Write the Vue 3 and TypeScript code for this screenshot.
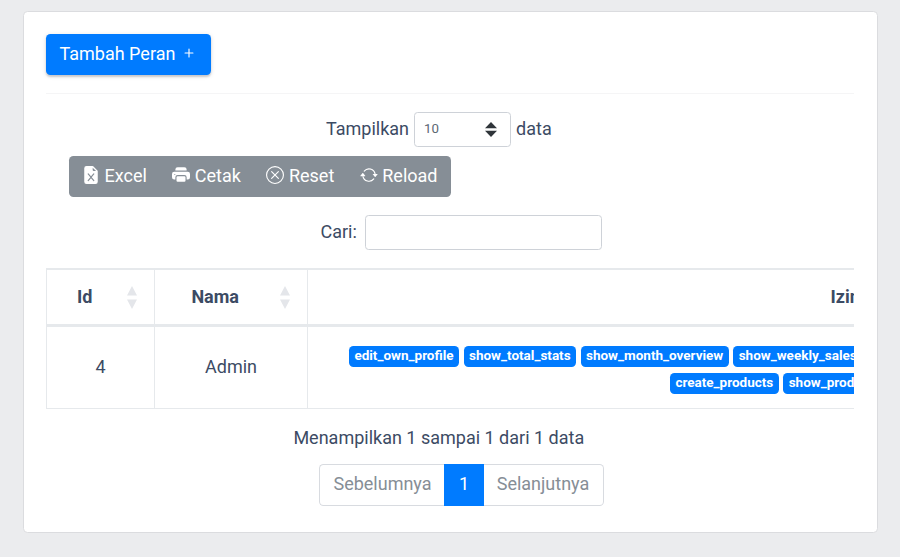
<script setup lang="ts">
import { ref } from 'vue'

interface ToolAction {
  label: string
  name: string
  paths: string[]
}

const actions: ToolAction[] = [
  {
    label: 'Excel',
    name: 'excel',
    paths: [
      'M9.293 0H4a2 2 0 0 0-2 2v12a2 2 0 0 0 2 2h8a2 2 0 0 0 2-2V4.707A1 1 0 0 0 13.707 4L10 .293A1 1 0 0 0 9.293 0zM9.5 3.5v-2l3 3h-2a1 1 0 0 1-1-1zM5.884 6.68 8 9.219l2.116-2.54a.5.5 0 1 1 .768.641L8.651 10l2.233 2.68a.5.5 0 0 1-.768.64L8 10.781l-2.116 2.54a.5.5 0 0 1-.768-.641L7.349 10 5.116 7.32a.5.5 0 1 1 .768-.64z',
    ],
  },
  {
    label: 'Cetak',
    name: 'print',
    paths: [
      'M5 1a2 2 0 0 0-2 2v1h10V3a2 2 0 0 0-2-2H5zm6 8H5a1 1 0 0 0-1 1v3a1 1 0 0 0 1 1h6a1 1 0 0 0 1-1v-3a1 1 0 0 0-1-1z',
      'M0 7a2 2 0 0 1 2-2h12a2 2 0 0 1 2 2v3a2 2 0 0 1-2 2h-1v-2a2 2 0 0 0-2-2H5a2 2 0 0 0-2 2v2H2a2 2 0 0 1-2-2V7zm2.5 1a.5.5 0 1 0 0-1 .5.5 0 0 0 0 1z',
    ],
  },
  {
    label: 'Reset',
    name: 'reset',
    paths: [
      'M8 15A7 7 0 1 1 8 1a7 7 0 0 1 0 14zm0 1A8 8 0 1 0 8 0a8 8 0 0 0 0 16z',
      'M4.646 4.646a.5.5 0 0 1 .708 0L8 7.293l2.646-2.647a.5.5 0 0 1 .708.708L8.707 8l2.647 2.646a.5.5 0 0 1-.708.708L8 8.707l-2.646 2.647a.5.5 0 0 1-.708-.708L7.293 8 4.646 5.354a.5.5 0 0 1 0-.708z',
    ],
  },
  {
    label: 'Reload',
    name: 'reload',
    paths: [
      'M11.534 7h3.932a.25.25 0 0 1 .192.41l-1.966 2.36a.25.25 0 0 1-.384 0l-1.966-2.36a.25.25 0 0 1 .192-.41zm-11 2h3.932a.25.25 0 0 0 .192-.41L2.692 6.23a.25.25 0 0 0-.384 0L.342 8.59A.25.25 0 0 0 .534 9z',
      'M8 3c-1.552 0-2.94.707-3.857 1.818a.5.5 0 1 1-.771-.636A6.002 6.002 0 0 1 13.917 7H12.9A5.002 5.002 0 0 0 8 3zM3.1 9a5.002 5.002 0 0 0 8.757 2.182.5.5 0 1 1 .771.636A6.002 6.002 0 0 1 2.083 9H3.1z',
    ],
  },
]

const firstLine: string[] = ['edit_own_profile', 'show_total_stats', 'show_month_overview', 'show_weekly_sales']
const secondLine: string[] = ['create_products', 'show_products']
const search = ref<string>('')
</script>

<template>
  <main class="card">
    <button class="add" type="button">
      <span>Tambah Peran</span>
      <svg viewBox="0 0 16 16" class="icon plus"><path d="M8 4a.5.5 0 0 1 .5.5v3h3a.5.5 0 0 1 0 1h-3v3a.5.5 0 0 1-1 0v-3h-3a.5.5 0 0 1 0-1h3v-3A.5.5 0 0 1 8 4z" /></svg>
    </button>
    <hr class="rule" />

    <div class="length">
      <span>Tampilkan</span>
      <div class="select">
        <span>10</span>
        <svg class="caret" viewBox="0 0 12 15"><path d="M6 0l6 6.2H0zM0 8.8h12L6 15z" /></svg>
      </div>
      <span>data</span>
    </div>

    <div class="tools">
      <button v-for="a in actions" :key="a.name" type="button" class="tool" :class="a.name">
        <svg viewBox="0 0 16 16" class="icon"><path v-for="p in a.paths" :key="p" :d="p" /></svg>
        <span>{{ a.label }}</span>
      </button>
    </div>

    <label class="search">
      <span>Cari:</span>
      <input v-model="search" type="text" />
    </label>

    <div class="scroller">
      <div class="grid">
        <div class="th id"><span>Id</span><svg class="sort" viewBox="0 0 10 23"><path d="M5 0l5 9.5H0zM0 13.5h10L5 23z" /></svg></div>
        <div class="th nama"><span>Nama</span><svg class="sort" viewBox="0 0 10 23"><path d="M5 0l5 9.5H0zM0 13.5h10L5 23z" /></svg></div>
        <div class="th izin"><span>Izin</span></div>
        <div class="td">4</div>
        <div class="td">Admin</div>
        <div class="td perms">
          <div class="line first"><span v-for="p in firstLine" :key="p" class="badge">{{ p }}</span></div>
          <div class="line second"><span v-for="p in secondLine" :key="p" class="badge">{{ p }}</span></div>
        </div>
      </div>
    </div>

    <div class="info">Menampilkan 1 sampai 1 dari 1 data</div>
    <nav class="pages">
      <span class="page prev">Sebelumnya</span>
      <span class="page active">1</span>
      <span class="page next">Selanjutnya</span>
    </nav>
  </main>
</template>

<style>
body {
  background: #ebecee;
  overflow: hidden;
}
</style>

<style scoped>
* {
  box-sizing: border-box;
}
.card {
  width: 855px;
  height: 522px;
  margin: 11px 0 0 23px;
  padding: 22px;
  background: #fff;
  border: 1px solid #dbdcdf;
  border-radius: 4.5px;
  font: 18px/27px Roboto, sans-serif;
  color: #3c4b64;
  display: flex;
  flex-direction: column;
  align-items: flex-start;
}
button {
  font: inherit;
  color: #fff;
  border: 0;
}
.icon {
  width: 18px;
  height: 18px;
  fill: currentColor;
  flex: none;
}
.add {
  display: flex;
  align-items: center;
  gap: 4.5px;
  width: 165px;
  height: 41px;
  padding: 0 13px 1px 13.5px;
  background: #007bff;
  border-radius: 4.5px;
  white-space: nowrap;
  box-shadow: 0 2px 2px rgba(0, 0, 21, .16), 0 1px 5px rgba(0, 0, 21, .12);
}
.add span {
  margin-bottom: 2px;
}
.plus {
  margin-bottom: 1.5px;
}
.rule {
  width: 808px;
  height: 1px;
  margin: 18px 0;
  border: 0;
  background: #f5f5f6;
}
.length {
  display: flex;
  align-items: center;
  gap: 5px;
  height: 35px;
  margin-left: 280px;
}
.length > span {
  margin-bottom: 3px;
}
.select {
  display: flex;
  align-items: center;
  justify-content: space-between;
  width: 97px;
  height: 35px;
  padding: 0 13px 0 9px;
  border: 1px solid #ced2d8;
  border-radius: 3.6px;
  font-size: 13.3px;
  color: #5c6873;
}
.select span {
  margin-bottom: 2px;
}
.caret {
  width: 12px;
  height: 15px;
  fill: #2f353a;
}
.tools {
  display: flex;
  width: 382px;
  height: 41px;
  margin: 9px 0 0 23px;
  background: #868e96;
  border-radius: 4.5px;
}
.tool {
  display: flex;
  align-items: center;
  gap: 4.5px;
  padding: 0 0 1px;
  background: none;
}
.tool .icon {
  margin-bottom: 2px;
}
.tool span {
  margin-bottom: 2px;
}
.tool.excel {
  margin-left: 13px;
}
.tool.print,
.tool.reset,
.tool.reload {
  margin-left: 25.5px;
}
.search {
  display: flex;
  align-items: center;
  gap: 8.5px;
  margin: 18px 0 0 274.5px;
}
.search span {
  margin-bottom: 3px;
}
.search input {
  width: 237px;
  height: 35px;
  border: 1px solid #ced2d8;
  border-radius: 3.6px;
  padding: 0 9px;
  outline: 0;
}
.scroller {
  width: 808px;
  margin-top: 18px;
  overflow: hidden;
}
.grid {
  display: grid;
  grid-template-columns: 108px 153px 1080px;
  grid-template-rows: 59px 82px;
  width: 1341px;
}
.th {
  display: flex;
  align-items: center;
  font-weight: 700;
  border-left: 1px solid #e6e9ec;
  border-top: 2px solid #e6e9ec;
  border-bottom: 3px solid #e6e9ec;
  padding-left: 30px;
}
.th span {
  margin-bottom: 2px;
}
.th.nama {
  padding-left: 36.4px;
}
.th.izin {
  padding-left: 522.6px;
}
.sort {
  width: 10px;
  height: 23px;
  margin: 1px 17px 0 auto;
  fill: #e4e6ea;
}
.td {
  display: flex;
  align-items: center;
  justify-content: center;
  padding-bottom: 2px;
  border-left: 1px solid #e6e9ec;
  border-bottom: 1px solid #e6e9ec;
}
.perms {
  flex-direction: column;
  align-items: flex-start;
  justify-content: flex-start;
  padding-top: 19px;
  gap: 6px;
}
.line {
  display: flex;
  gap: 4.6px;
}
.first {
  margin-left: 41px;
}
.second {
  margin-left: 362px;
}
.badge {
  height: 21px;
  padding: 0 5.4px;
  background: #007bff;
  border-radius: 4.5px;
  color: #fff;
  font-size: 13.5px;
  font-weight: 700;
  line-height: 19px;
  white-space: nowrap;
}
.info {
  margin: 15px 0 0 247.4px;
}
.pages {
  display: flex;
  width: 285px;
  height: 42px;
  margin: 13px 0 0 273px;
}
.page {
  display: flex;
  align-items: center;
  justify-content: center;
  border: 1px solid #d8dbe0;
  padding-bottom: 4px;
  color: #868e96;
}
.prev {
  width: 125px;
  padding-left: 1px;
  border-right: 0;
  border-radius: 4.5px 0 0 4.5px;
}
.active {
  width: 40px;
  background: #007bff;
  border-color: #007bff;
  color: #fff;
}
.next {
  width: 120px;
  padding-right: 1px;
  border-left: 0;
  border-radius: 0 4.5px 4.5px 0;
}
</style>
